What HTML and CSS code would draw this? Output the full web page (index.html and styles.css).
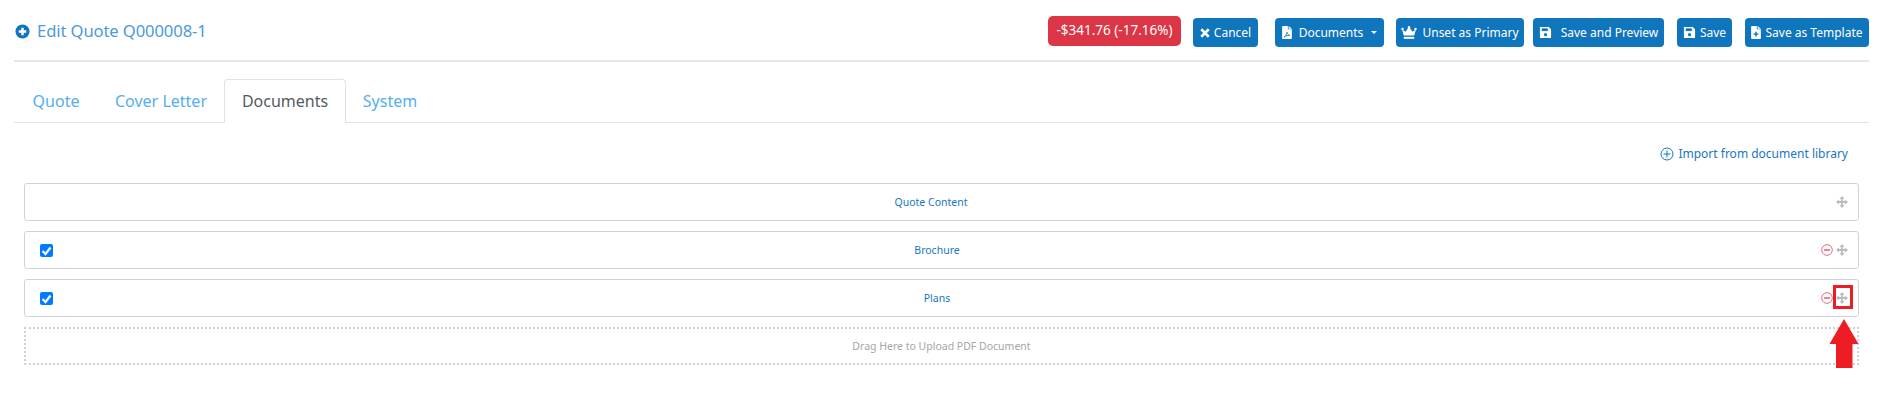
FILE: index.html
```html
<!DOCTYPE html>
<html lang="en">
<head>
<meta charset="utf-8">
<title>Edit Quote</title>
<link rel="stylesheet" href="styles.css">
</head>
<body>
<div class="page">
  <header class="top">
    <h1 class="title">
      <svg class="title-icon" viewBox="0 0 16 16"><circle cx="8" cy="8" r="7.500" fill="#0f75bc"/><path d="M8 4v8M4 8h8" stroke="#fff" stroke-width="2.600"/></svg>
      Edit Quote Q000008-1
    </h1>
    <div class="actions">
      <span class="badge">-$341.76 (-17.16%)</span>
      <button class="btn cancel"><svg class="ic" viewBox="0 0 12 12"><path d="M1.500 1.500l9 9M10.500 1.500l-9 9" stroke="#fff" stroke-width="3"/></svg>Cancel</button>
      <button class="btn docs"><svg class="ic file" viewBox="0 0 12 16"><path d="M0 1a1 1 0 0 1 1-1h6v4h5v11a1 1 0 0 1-1 1H1a1 1 0 0 1-1-1z" fill="#fff"/><path d="M8 0l4 3.400H8z" fill="#fff"/><path d="M2.500 13.500c2-1 3-3 3.500-6 .5 2.500 1.500 3.500 3.500 4-2.500 0-5 .5-7 2z" fill="none" stroke="#0f75bc" stroke-width="1"/></svg>Documents<i class="caret"></i></button>
      <button class="btn unset"><svg class="ic crown" viewBox="0 0 18 15"><path d="M3 11L1 4l4 2.500L9 1l4 5.500L17 4l-2 7z" fill="#fff"/><circle cx="1.500" cy="3.500" r="1.400" fill="#fff"/><circle cx="9" cy="1.500" r="1.400" fill="#fff"/><circle cx="16.500" cy="3.500" r="1.400" fill="#fff"/><rect x="3" y="12.500" width="12" height="2.300" fill="#fff"/></svg>Unset as Primary</button>
      <button class="btn preview"><svg class="ic save" viewBox="0 0 14 14"><path d="M1.500 1h9L13 3.500V12a1 1 0 0 1-1 1H2a1 1 0 0 1-1-1V1.500z" fill="#fff"/><rect x="3" y="2.500" width="6.500" height="3" fill="#0f75bc"/><circle cx="7" cy="9.300" r="1.700" fill="#0f75bc"/></svg>Save and Preview</button>
      <button class="btn plain"><svg class="ic save" viewBox="0 0 14 14"><path d="M1.500 1h9L13 3.500V12a1 1 0 0 1-1 1H2a1 1 0 0 1-1-1V1.500z" fill="#fff"/><rect x="3" y="2.500" width="6.500" height="3" fill="#0f75bc"/><circle cx="7" cy="9.300" r="1.700" fill="#0f75bc"/></svg>Save</button>
      <button class="btn template"><svg class="ic file" viewBox="0 0 12 16"><path d="M0 1a1 1 0 0 1 1-1h6v4h5v11a1 1 0 0 1-1 1H1a1 1 0 0 1-1-1z" fill="#fff"/><path d="M8 0l4 3.400H8z" fill="#fff"/><path d="M6 7v6M3 10h6" stroke="#0f75bc" stroke-width="1.800"/></svg>Save as Template</button>
    </div>
  </header>

  <nav class="tabs">
    <a class="tab">Quote</a>
    <a class="tab">Cover Letter</a>
    <a class="tab active">Documents</a>
    <a class="tab">System</a>
  </nav>

  <div class="import">
    <a class="import-link">
      <svg class="import-icon" viewBox="0 0 14 14"><circle cx="7" cy="7" r="6" fill="none" stroke="#1976c0"/><path d="M7 3.500v7M3.500 7h7" stroke="#1976c0"/></svg>
      Import from document library
    </a>
  </div>

  <div class="list">
    <div class="row">
      <span class="row-left"></span>
      <a class="row-name name-wide">Quote Content</a>
      <span class="row-right"><svg class="move" viewBox="0 0 12 12"><use href="#move"/></svg></span>
    </div>
    <div class="row">
      <span class="row-left"><span class="check"><svg viewBox="0 0 13 13"><path d="M2.500 7l3 3 5-6.500" fill="none" stroke="#fff" stroke-width="2.200"/></svg></span></span>
      <a class="row-name">Brochure</a>
      <span class="row-right"><svg class="minus" viewBox="0 0 12 12"><circle cx="6" cy="6" r="5.300" fill="none" stroke="#e46a78"/><path d="M3 6h6" stroke="#dc3545" stroke-width="1.200"/></svg><svg class="move" viewBox="0 0 12 12"><use href="#move"/></svg></span>
    </div>
    <div class="row">
      <span class="row-left"><span class="check"><svg viewBox="0 0 13 13"><path d="M2.500 7l3 3 5-6.500" fill="none" stroke="#fff" stroke-width="2.200"/></svg></span></span>
      <a class="row-name">Plans</a>
      <span class="row-right"><svg class="minus" viewBox="0 0 12 12"><circle cx="6" cy="6" r="5.300" fill="none" stroke="#e46a78"/><path d="M3 6h6" stroke="#dc3545" stroke-width="1.200"/></svg><svg class="move" viewBox="0 0 12 12"><use href="#move"/></svg></span>
    </div>
    <div class="drop">Drag Here to Upload PDF Document</div>
  </div>
</div>

<div class="callout-box"></div>
<svg class="callout-arrow" viewBox="0 0 30 50"><path d="M15 0L29.500 25H23.500V49H7V25H.5z" fill="#ee1c25"/></svg>

<svg class="defs" width="0" height="0"><defs><g id="move"><path d="M6 0L8.500 3h-5zM6 12L3.500 9h5zM0 6l3-2.500v5zM12 6L9 8.500v-5z" fill="#b9bcc2"/><path d="M6 2v8M2 6h8" stroke="#b9bcc2" stroke-width="1.800"/></g></defs></svg>
</body>
</html>
```
FILE: styles.css
```css
* { box-sizing: border-box; }
html, body { margin: 0; padding: 0; background: #fff; }
body { font-family: "Noto Sans", "Open Sans", sans-serif; height: 414px; overflow: hidden; position: relative; }
.page { padding: 0 18px 0 14px; }

.top {
  display: flex;
  justify-content: space-between;
  height: 62px;
  border-bottom: 2px solid #e5e7ea;
}
.title {
  margin: 0;
  padding: 20px 0 0 1px;
  font-size: 16.600px;
  line-height: 22px;
  font-weight: 400;
  color: #4c9ad9;
  display: flex;
  align-items: center;
  align-self: flex-start;
  letter-spacing: -.1px;
}
.title-icon { width: 15px; height: 15px; margin-right: 7px; }

.actions { display: flex; align-items: flex-start; padding-top: 16px; }
.badge {
  width: 133px;
  height: 30px;
  background: #dc3545;
  color: #fff;
  border-radius: 5px;
  font-size: 13.500px;
  line-height: 29px;
  text-align: center;
  white-space: nowrap;
}
.btn {
  height: 29px;
  margin-top: 2px;
  padding: 0;
  border: 0;
  border-radius: 4px;
  background: #0f75bc;
  color: #fff;
  font-family: inherit;
  font-size: 12px;
  display: flex;
  align-items: center;
  justify-content: center;
  white-space: nowrap;
}
.cancel { width: 65px; margin-left: 12px; }
.docs { width: 109px; margin-left: 17px; }
.unset { width: 128px; margin-left: 12px; }
.preview { width: 131px; margin-left: 9px; }
.plain { width: 55px; margin-left: 13px; }
.template { width: 124px; margin-left: 13px; }
.ic { flex: none; }
.cancel .ic { width: 10px; height: 10px; margin-right: 4px; }
.file { width: 10px; height: 13px; margin-right: 7px; }
.template .file { margin-right: 4px; }
.crown { width: 16px; height: 13px; margin-right: 5px; }
.save { width: 13px; height: 13px; margin-right: 9px; }
.plain .save { margin-right: 4px; }
.caret {
  width: 0; height: 0; margin-left: 8px;
  border-left: 3.500px solid transparent;
  border-right: 3.500px solid transparent;
  border-top: 3.500px solid #fff;
}

.tabs {
  display: flex;
  margin-top: 17px;
  height: 44px;
  border-bottom: 1px solid #dfe2e6;
}
.tab {
  height: 44px;
  padding-top: 10px;
  font-size: 16px;
  line-height: 22px;
  color: #55aef0;
  text-align: center;
  border: 1px solid transparent;
  border-bottom: 0;
  border-radius: 4px 4px 0 0;
}
.tab:nth-child(1) { width: 84px; }
.tab:nth-child(2) { width: 126px; }
.tab.active { width: 122px; color: #555a60; background: #fff; border-color: #dfe2e6; }
.tab:nth-child(4) { width: 88px; }

.import { display: flex; justify-content: flex-end; padding: 22px 21px 0 0; height: 60px; }
.import-link { font-size: 12px; line-height: 18px; color: #1976c0; display: flex; align-items: center; height: 18px; }
.import-icon { width: 14px; height: 14px; margin-right: 4px; }

.list { padding: 0 10px 0 10px; display: flex; flex-direction: column; gap: 11px; }
.row {
  height: 38px;
  border: 1px solid #cfd3d9;
  border-radius: 3px;
  display: grid;
  grid-template-columns: 1fr auto 1fr;
  align-items: center;
  padding: 0 10px 0 15px;
  margin-bottom: -1px;
}
.row-left { display: flex; }
.row-name { font-size: 10.500px; color: #1976c0; text-align: center; margin-right: 14px; }
.row-name.name-wide { margin-right: 26px; }
.row-right { display: flex; justify-content: flex-end; align-items: center; gap: 3px; }
.check {
  width: 13px; height: 13px;
  background: #007bff;
  border-radius: 2px;
  display: block;
}
.check svg { display: block; width: 13px; height: 13px; }
.move { width: 12px; height: 12px; display: block; }
.minus { width: 12px; height: 12px; display: block; }
.drop {
  height: 38px;
  border: 2px dotted #cfd1d5;
  font-size: 10.500px;
  line-height: 35px;
  color: #a3a6aa;
  text-align: center;
}

.callout-box {
  position: absolute;
  left: 1833px; top: 285px;
  width: 20px; height: 24px;
  border: 3px solid #ee1c25;
}
.callout-arrow {
  position: absolute;
  left: 1829px; top: 319px;
  width: 30px; height: 50px;
}
.defs { position: absolute; }
```
